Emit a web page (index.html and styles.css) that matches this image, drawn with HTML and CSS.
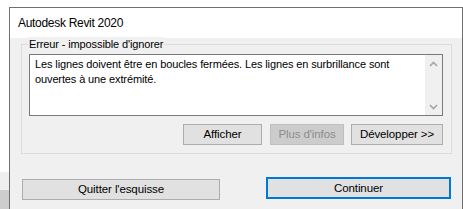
FILE: index.html
```html
<!DOCTYPE html>
<html lang="fr">
<head>
<meta charset="utf-8">
<title>Autodesk Revit 2020</title>
<link rel="stylesheet" href="styles.css">
</head>
<body>
<div class="window">
  <div class="titlebar">Autodesk Revit 2020</div>
  <div class="content">
    <div class="group">
      <span class="legend">Erreur - impossible d'ignorer</span>
      <div class="textbox">
        <div class="msg">Les lignes doivent être en boucles fermées. Les lignes en surbrillance sont<br>ouvertes à une extrémité.</div>
        <div class="scroll">
          <svg class="arrow" width="9" height="6" viewBox="0 0 9 6"><path d="M1 5 L4.5 1.5 L8 5" fill="none" stroke="#a6a6a6" stroke-width="1.6"/></svg>
          <svg class="arrow" width="9" height="6" viewBox="0 0 9 6"><path d="M1 1 L4.5 4.5 L8 1" fill="none" stroke="#a6a6a6" stroke-width="1.6"/></svg>
        </div>
      </div>
      <div class="actions">
        <button class="btn btn-show">Afficher</button>
        <button class="btn btn-more" disabled>Plus d'infos</button>
        <button class="btn btn-expand">Développer &gt;&gt;</button>
      </div>
    </div>
    <div class="footer">
      <button class="btn btn-quit">Quitter l'esquisse</button>
      <button class="btn btn-continue">Continuer</button>
    </div>
  </div>
</div>
</body>
</html>
```
FILE: styles.css
```css
html, body {
  margin: 0;
  padding: 0;
}
body {
  width: 463px;
  height: 209px;
  overflow: hidden;
  background: linear-gradient(to bottom, #ffffff 0, #ffffff 172px, #efefef 172px, #efefef 190px, #cdcdcd 190px);
  font-family: "Liberation Sans", Arial, sans-serif;
  font-size: 11px;
  letter-spacing: -0.12px;
  color: #000;
}
.window {
  margin: 7px 0 0 9px;
  width: 452px;
  height: 202px;
  border: 1px solid #6f6f6f;
  border-bottom: 0;
  background: #f0f0f0;
}
.titlebar {
  height: 30px;
  line-height: 30px;
  background: #fff;
  padding-left: 8px;
  font-size: 12px;
  letter-spacing: -0.3px;
}
.content {
  padding: 6px 10px 0 11px;
}
.group {
  position: relative;
  box-sizing: border-box;
  height: 110px;
  border: 1px solid #dcdcdc;
  padding: 9px 8px 0 7px;
}
.legend {
  position: absolute;
  top: -8px;
  left: 6px;
  padding: 0 1px;
  line-height: 15px;
  background: #f0f0f0;
}
.textbox {
  box-sizing: border-box;
  height: 62px;
  border: 1px solid #7a7a7a;
  background: #fff;
  display: flex;
}
.msg {
  flex: 1;
  padding: 2px 5px 0;
  line-height: 15px;
  white-space: nowrap;
}
.scroll {
  width: 17px;
  background: #f0f0f0;
  display: flex;
  flex-direction: column;
  justify-content: space-between;
  align-items: center;
  padding: 6px 0 5px;
  box-sizing: border-box;
}
.arrow {
  display: block;
}
.actions {
  display: flex;
  justify-content: flex-end;
  gap: 7px;
  margin-top: 8px;
}
.btn {
  box-sizing: border-box;
  height: 21px;
  margin: 0;
  padding: 0;
  border: 1px solid #adadad;
  background: #e1e1e1;
  font-family: inherit;
  font-size: 11.5px;
  letter-spacing: -0.1px;
  color: #000;
  line-height: 19px;
}
.btn-show {
  width: 79px;
  margin-right: 1px;
}
.btn-more {
  width: 74px;
  background: #cccccc;
  border-color: #bfbfbf;
  color: #8d8d8d;
}
.btn-expand {
  width: 92px;
}
.footer {
  display: flex;
  justify-content: space-between;
  align-items: flex-start;
  margin-top: 23px;
  padding: 0 1px;
}
.btn-quit {
  width: 198px;
  margin-top: 2px;
}
.btn-continue {
  width: 185px;
  height: 22px;
  border: 2px solid #0078d7;
  line-height: 18px;
}
```
